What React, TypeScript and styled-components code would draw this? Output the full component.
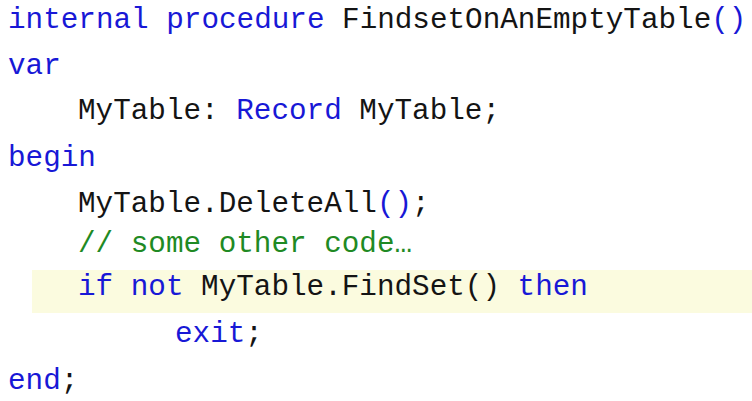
import React from "react";
import styled, { createGlobalStyle } from "styled-components";

const Global = createGlobalStyle`
  html, body {
    margin: 0;
    padding: 0;
    background: #ffffff;
  }
  body {
    width: 752px;
    height: 401px;
    overflow: hidden;
  }
`;

const Editor = styled.pre`
  margin: -2px 0 0 0;
  padding: 0 0 0 8px;
  display: flex;
  flex-direction: column;
  font-family: "Liberation Mono", "DejaVu Sans Mono", monospace;
  font-size: 29.3px;
  color: #141414;
  white-space: pre;
`;

const Line = styled.div<{ $indent?: number; $shift?: number }>`
  height: 46px;
  line-height: 46px;
  margin-top: ${(p) => p.$shift ?? 0}px;
  padding-left: ${(p) => p.$indent ?? 0}px;
`;

const HighlightLine = styled.div<{ $shift?: number }>`
  height: 35px;
  line-height: 35px;
  padding-bottom: 8px;
  margin-top: ${(p) => p.$shift ?? 0}px;
  margin-left: 24px;
  padding-left: 46px;
  background: #fbfbdf;
`;

const Kw = styled.span`
  color: #1818d6;
`;

const Comment = styled.span`
  color: #1f8a24;
`;

export default function App() {
  return (
    <>
      <Global />
      <Editor>
        <Line>
          <Kw>internal procedure</Kw> FindsetOnAnEmptyTable<Kw>()</Kw>
        </Line>
        <Line>
          <Kw>var</Kw>
        </Line>
        <Line $indent={70} $shift={-1}>
          MyTable: <Kw>Record</Kw> MyTable;
        </Line>
        <Line $shift={1}>
          <Kw>begin</Kw>
        </Line>
        <Line $indent={70}>
          MyTable.DeleteAll<Kw>()</Kw>;
        </Line>
        <Line $indent={70} $shift={-6}>
          <Comment>// some other code…</Comment>
        </Line>
        <HighlightLine $shift={2}>
          <Kw>if not</Kw> MyTable.FindSet() <Kw>then</Kw>
        </HighlightLine>
        <Line $indent={167} $shift={-1}>
          <Kw>exit</Kw>;
        </Line>
        <Line $shift={1}>
          <Kw>end</Kw>;
        </Line>
      </Editor>
    </>
  );
}
